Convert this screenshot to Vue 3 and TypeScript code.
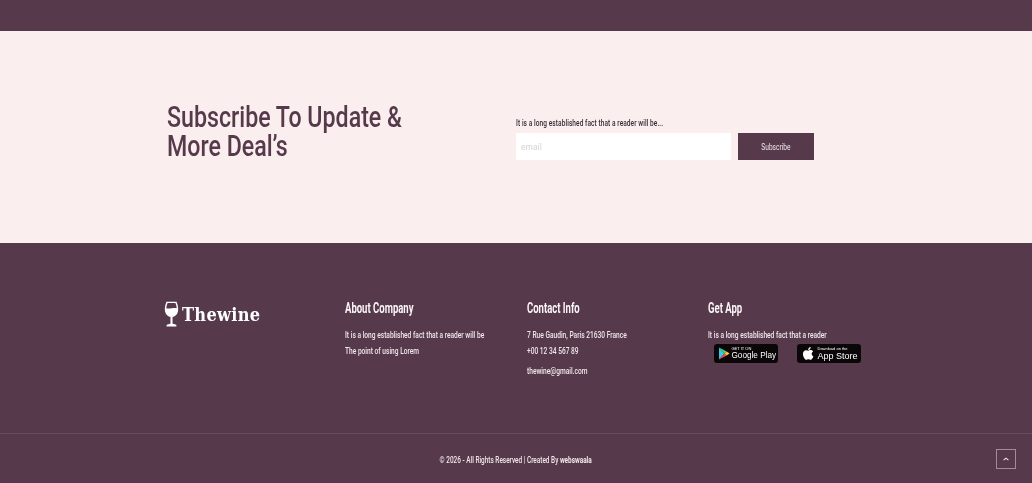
<template>
  <div class="page">
    <div class="top-strip"></div>

    <section class="subscribe">
      <h2 class="sub-title">Subscribe To Update &amp;<br />More Deal’s</h2>
      <div class="sub-form">
        <p class="sub-text">It is a long established fact that a reader will be...</p>
        <div class="sub-row">
          <input class="sub-input" type="text" placeholder="email" />
          <button class="sub-btn" type="button"><span>Subscribe</span></button>
        </div>
      </div>
    </section>

    <footer class="footer">
      <div class="columns">
        <div class="logo">
          <svg class="glass" viewBox="0 0 16 28" width="15" height="28">
            <path d="M2.6 .8 H13.4 C15.4 6 15.8 10.6 14 13.6 C12.8 15.8 10.6 16.8 9.1 17 V24 C10.5 24.7 12.2 25 13.2 25.6 V27.2 H2.8 V25.6 C3.8 25 5.5 24.7 6.9 24 V17 C5.4 16.8 3.2 15.8 2 13.6 C.2 10.6 .6 6 2.6 .8 Z" fill="#fff" />
            <path d="M3.8 2.2 H12.2 C13 4.4 13.5 6.2 13.6 7.8 C10 6.6 6 9.2 2.4 7.8 C2.5 6.2 3 4.4 3.8 2.2 Z" fill="#563a4b" />
          </svg>
          <span class="logo-text">Thewine</span>
        </div>

        <div class="col">
          <h4 class="col-title">About Company</h4>
          <p class="line">It is a long established fact that a reader will be</p>
          <p class="line">The point of using Lorem</p>
        </div>

        <div class="col">
          <h4 class="col-title">Contact Info</h4>
          <p class="line">7 Rue Gaudin, Paris 21630 France</p>
          <p class="line">+00 12 34 567 89</p>
          <p class="line mail">thewine@gmail.com</p>
        </div>

        <div class="col">
          <h4 class="col-title">Get App</h4>
          <p class="line">It is a long established fact that a reader</p>
          <div class="badges">
            <div class="badge play">
              <svg viewBox="0 0 12 13" width="12" height="13">
                <path d="M1 .5 L6.5 6.5 L1 12.5 Z" fill="#37c6e8" />
                <path d="M1 .5 L8.6 4.6 L6.5 6.5 Z" fill="#4fd07a" />
                <path d="M1 12.5 L8.6 8.4 L6.5 6.5 Z" fill="#ee4b55" />
                <path d="M8.6 4.6 L11.6 6.5 L8.6 8.4 L6.5 6.5 Z" fill="#f8c92f" />
              </svg>
              <div class="badge-text">
                <span class="small">GET IT ON</span>
                <span class="big">Google Play</span>
              </div>
            </div>
            <div class="badge store">
              <svg viewBox="0 0 24 24" width="15" height="15">
                <path fill="#fff" d="M17.05 12.54c-.03-2.6 2.13-3.85 2.22-3.91-1.21-1.77-3.09-2.01-3.76-2.04-1.6-.16-3.12.94-3.93.94-.81 0-2.06-.92-3.39-.89-1.74.03-3.35 1.01-4.25 2.57-1.81 3.14-.46 7.8 1.3 10.35.86 1.25 1.89 2.65 3.24 2.6 1.3-.05 1.79-.84 3.36-.84 1.57 0 2.01.84 3.39.81 1.4-.02 2.28-1.27 3.14-2.53.99-1.45 1.4-2.85 1.42-2.93-.03-.01-2.72-1.04-2.74-4.13zM14.47 4.9c.72-.87 1.2-2.08 1.07-3.28-1.03.04-2.28.69-3.02 1.55-.66.77-1.24 2-1.09 3.18 1.15.09 2.33-.58 3.04-1.45z" />
              </svg>
              <div class="badge-text">
                <span class="small">Download on the</span>
                <span class="big">App Store</span>
              </div>
            </div>
          </div>
        </div>
      </div>

      <div class="bottom">
        <p class="copy">© 2026 - All Rights Reserved | Created By <strong>webswaala</strong></p>
        <a class="to-top" href="#">
          <svg viewBox="0 0 10 6" width="6" height="4">
            <path d="M1 5 L5 1.5 L9 5" fill="none" stroke="#f1e7eb" stroke-width="1.8" />
          </svg>
        </a>
      </div>
    </footer>
  </div>
</template>

<script setup lang="ts">
</script>

<style>
body {
  margin: 0;
}
</style>

<style scoped>
.page {
  width: 1032px;
  height: 483px;
  overflow: hidden;
  font-family: "Roboto", "Liberation Sans", sans-serif;
  background: #563a4b;
  filter: blur(0.35px);
}
.top-strip {
  height: 31px;
}

/* subscribe band */
.subscribe {
  height: 212px;
  box-sizing: border-box;
  background: #faeeee;
  padding: 72px 0 0 167px;
  display: grid;
  grid-template-columns: 349px 298px;
  align-items: start;
}
/* no condensed family is installed, so the text is narrowed by hand */
.sub-title {
  margin: 0;
  font-size: 29px;
  line-height: 29px;
  font-weight: 500;
  color: #563a4b;
  white-space: nowrap;
  transform: scaleX(0.8);
  transform-origin: left;
}
.sub-form {
  padding-top: 14px;
}
.sub-text {
  margin: 0 0 5px;
  font-size: 9.5px;
  line-height: 11px;
  font-weight: 500;
  letter-spacing: 0.1px;
  color: #3c2b35;
  white-space: nowrap;
  transform: scaleX(0.69);
  transform-origin: left;
}
.sub-row {
  display: flex;
  gap: 7px;
}
.sub-input {
  width: 215px;
  height: 27px;
  box-sizing: border-box;
  border: 0;
  outline: 0;
  padding: 0 5px;
  background: #fff;
  font-family: inherit;
  font-size: 8.5px;
}
.sub-input::placeholder {
  color: #d8d2d5;
}
.sub-btn {
  width: 76px;
  height: 27px;
  border: 0;
  padding: 0;
  background: #563a4b;
  color: #f4e9ee;
  font-family: inherit;
  font-size: 9px;
}
.sub-btn span {
  display: inline-block;
  transform: scaleX(0.73);
}

/* footer */
.footer {
  height: 240px;
  display: flex;
  flex-direction: column;
  color: #f1e7eb;
}
.columns {
  height: 190px;
  box-sizing: border-box;
  padding: 57px 0 0 164px;
  display: grid;
  grid-template-columns: 181px 181.5px 181px 190px;
}
.logo {
  display: flex;
  align-items: center;
  gap: 3px;
  height: 28px;
}
.logo-text {
  font-family: "DejaVu Serif", "Liberation Serif", serif;
  font-weight: 700;
  font-stretch: condensed;
  font-size: 18px;
  letter-spacing: 0.3px;
  color: #fff;
}
.col-title {
  margin: 0 0 11px;
  font-size: 14px;
  line-height: 16px;
  font-weight: 700;
  color: #fbf5f7;
  white-space: nowrap;
  transform: scaleX(0.68);
  transform-origin: left;
}
.line {
  margin: 0;
  font-size: 9.2px;
  line-height: 16px;
  font-weight: 500;
  white-space: nowrap;
  transform: scaleX(0.72);
  transform-origin: left;
}
.mail {
  margin-top: 4px;
}
.badges {
  display: flex;
  gap: 19px;
  padding-left: 6px;
  margin-top: 1px;
}
.badge {
  height: 19px;
  box-sizing: border-box;
  background: #0b0709;
  border-radius: 3px;
  display: flex;
  align-items: center;
  gap: 2px;
  padding: 0 3px;
  color: #fff;
}
.badge svg {
  flex-shrink: 0;
}
.play {
  width: 64px;
  padding-left: 4px;
}
.play .big {
  font-size: 8.2px;
}
.store {
  width: 64px;
  padding-left: 4px;
}
.store .big {
  font-size: 9px;
}
.badge-text {
  display: flex;
  flex-direction: column;
  font-family: "Liberation Sans", sans-serif;
}
.small {
  font-size: 4px;
  line-height: 5px;
  white-space: nowrap;
}
.big {
  line-height: 10px;
  white-space: nowrap;
}

.bottom {
  flex: 1;
  border-top: 1px solid #684c5c;
  display: flex;
  align-items: center;
  justify-content: center;
  position: relative;
}
.copy {
  margin: 0;
  font-size: 9.2px;
  font-weight: 500;
  padding-top: 2px;
  white-space: nowrap;
  transform: scaleX(0.7);
}
.to-top {
  position: absolute;
  left: 996px;
  top: 15px;
  width: 20px;
  height: 20px;
  box-sizing: border-box;
  border: 1px solid #a08d99;
  display: flex;
  align-items: center;
  justify-content: center;
}
</style>
